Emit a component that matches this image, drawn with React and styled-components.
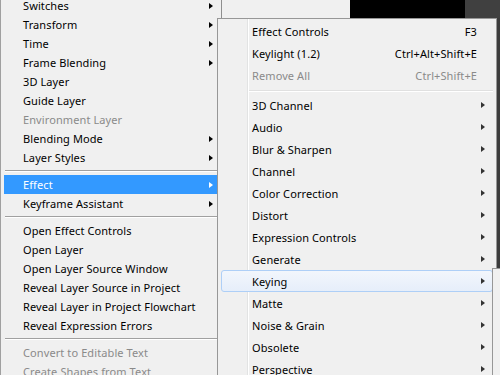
import styled, { createGlobalStyle } from "styled-components";

const Global = createGlobalStyle`
  html, body {
    margin: 0;
    padding: 0;
    width: 500px;
    height: 375px;
    overflow: hidden;
    background: #3c3c3c;
  }
  * { box-sizing: border-box; }
`;

const Desktop = styled.div`
  position: relative;
  width: 500px;
  height: 375px;
  overflow: hidden;
  background: #3c3c3c;
  font-family: "Noto Sans", "Open Sans", sans-serif;
  font-size: 11px;
  letter-spacing: 0.1px;
  color: #000;
`;

const TopStrip = styled.div`
  display: flex;
  height: 18px;
  padding-left: 222px;
`;

const Panel = styled.div`
  width: ${(p) => p.w}px;
  background: ${(p) => p.bg};
`;

/* classic popup menu (left) */
const ClassicMenu = styled.div`
  position: absolute;
  left: 0;
  top: -7px;
  width: 222px;
  padding: 3px 4px 3px 3px;
  background: #f0f0f0;
  border-left: 1px solid #a0a0a0;
  border-right: 1px solid #8f8f8f;
`;

const ClassicRow = styled.div`
  display: flex;
  align-items: center;
  height: 19px;
  padding-left: 19px;
  padding-right: 4px;
  color: ${(p) => (p.$active ? "#fff" : p.$disabled ? "#8a8a8a" : "#000")};
  background: ${(p) => (p.$active ? "#3399ff" : "transparent")};
  white-space: nowrap;
`;

const Label = styled.span`
  flex: 1;
`;

const Arrow = styled.span`
  width: 0;
  height: 0;
  border-top: 3.5px solid transparent;
  border-bottom: 3.5px solid transparent;
  border-left: 4px solid ${(p) => p.color || "#000"};
`;

const ClassicSep = styled.div`
  height: 8px;
  padding-top: 3px;
  margin-left: 1px;
  &::before {
    content: "";
    display: block;
    height: 1px;
    background: #a0a0a0;
    border-bottom: 1px solid #fff;
    box-sizing: content-box;
  }
`;

/* themed submenu (right) */
const ThemedMenu = styled.div`
  position: absolute;
  left: 217px;
  top: 18px;
  width: 280px;
  padding: 1px 3px 0 3px;
  background: #f0f0f0;
  border: 1px solid #979797;
  border-bottom: none;
  &::before {
    content: "";
    position: absolute;
    left: 29px;
    top: 0;
    bottom: 0;
    width: 1px;
    background: #e2e3e3;
    box-shadow: 1px 0 0 #fff;
  }
`;

const ThemedRow = styled.div`
  position: relative;
  display: flex;
  align-items: center;
  height: 22px;
  padding: 0 7px 0 30px;
  white-space: nowrap;
  color: ${(p) => (p.$disabled ? "#8a8a8a" : "#000")};
  border: 1px solid ${(p) => (p.$hot ? "#aecff7" : "transparent")};
  border-radius: 3px;
  background: ${(p) =>
    p.$hot ? "linear-gradient(#f2f6fc, #e6eefa)" : "transparent"};
`;

const Shortcut = styled.span`
  margin-right: 8px;
`;

const ThemedSep = styled.div`
  height: 8px;
  margin-left: 28px;
  padding-top: 4px;
  &::before {
    content: "";
    display: block;
    height: 1px;
    background: #e0e0e0;
    border-bottom: 1px solid #fff;
    box-sizing: content-box;
  }
`;

const ThirdMenu = styled.div`
  position: absolute;
  left: 492px;
  top: 268px;
  width: 40px;
  height: 120px;
  background: #f0f0f0;
  border: 1px solid #979797;
`;

const leftTop = [
  ["Switches", true],
  ["Transform", true],
  ["Time", true],
  ["Frame Blending", true],
  ["3D Layer"],
  ["Guide Layer"],
  ["Environment Layer", false, true],
  ["Blending Mode", true],
  ["Layer Styles", true],
];

const leftBottom = [
  "Open Effect Controls",
  "Open Layer",
  "Open Layer Source Window",
  "Reveal Layer Source in Project",
  "Reveal Layer in Project Flowchart",
  "Reveal Expression Errors",
];

const effects = [
  "3D Channel",
  "Audio",
  "Blur & Sharpen",
  "Channel",
  "Color Correction",
  "Distort",
  "Expression Controls",
  "Generate",
  "Keying",
  "Matte",
  "Noise & Grain",
  "Obsolete",
  "Perspective",
];

export default function App() {
  return (
    <Desktop>
      <Global />
      <TopStrip>
        <Panel w={128} bg="#f0f0f0" />
        <Panel w={115} bg="#000" />
        <Panel w={35} bg="#404040" />
      </TopStrip>

      <ClassicMenu>
        {leftTop.map(([name, sub, dis]) => (
          <ClassicRow key={name} $disabled={dis}>
            <Label>{name}</Label>
            {sub && <Arrow />}
          </ClassicRow>
        ))}
        <ClassicSep />
        <ClassicRow $active>
          <Label>Effect</Label>
          <Arrow color="#fff" />
        </ClassicRow>
        <ClassicRow>
          <Label>Keyframe Assistant</Label>
          <Arrow />
        </ClassicRow>
        <ClassicSep />
        {leftBottom.map((name) => (
          <ClassicRow key={name}>
            <Label>{name}</Label>
          </ClassicRow>
        ))}
        <ClassicSep />
        <ClassicRow $disabled>
          <Label>Convert to Editable Text</Label>
        </ClassicRow>
        <ClassicRow $disabled>
          <Label>Create Shapes from Text</Label>
        </ClassicRow>
      </ClassicMenu>

      <ThemedMenu>
        <ThemedRow>
          <Label>Effect Controls</Label>
          <Shortcut>F3</Shortcut>
        </ThemedRow>
        <ThemedRow>
          <Label>Keylight (1.2)</Label>
          <Shortcut>Ctrl+Alt+Shift+E</Shortcut>
        </ThemedRow>
        <ThemedRow $disabled>
          <Label>Remove All</Label>
          <Shortcut>Ctrl+Shift+E</Shortcut>
        </ThemedRow>
        <ThemedSep />
        {effects.map((name) => (
          <ThemedRow key={name} $hot={name === "Keying"}>
            <Label>{name}</Label>
            <Arrow color="#333" />
          </ThemedRow>
        ))}
      </ThemedMenu>

      <ThirdMenu />
    </Desktop>
  );
}
